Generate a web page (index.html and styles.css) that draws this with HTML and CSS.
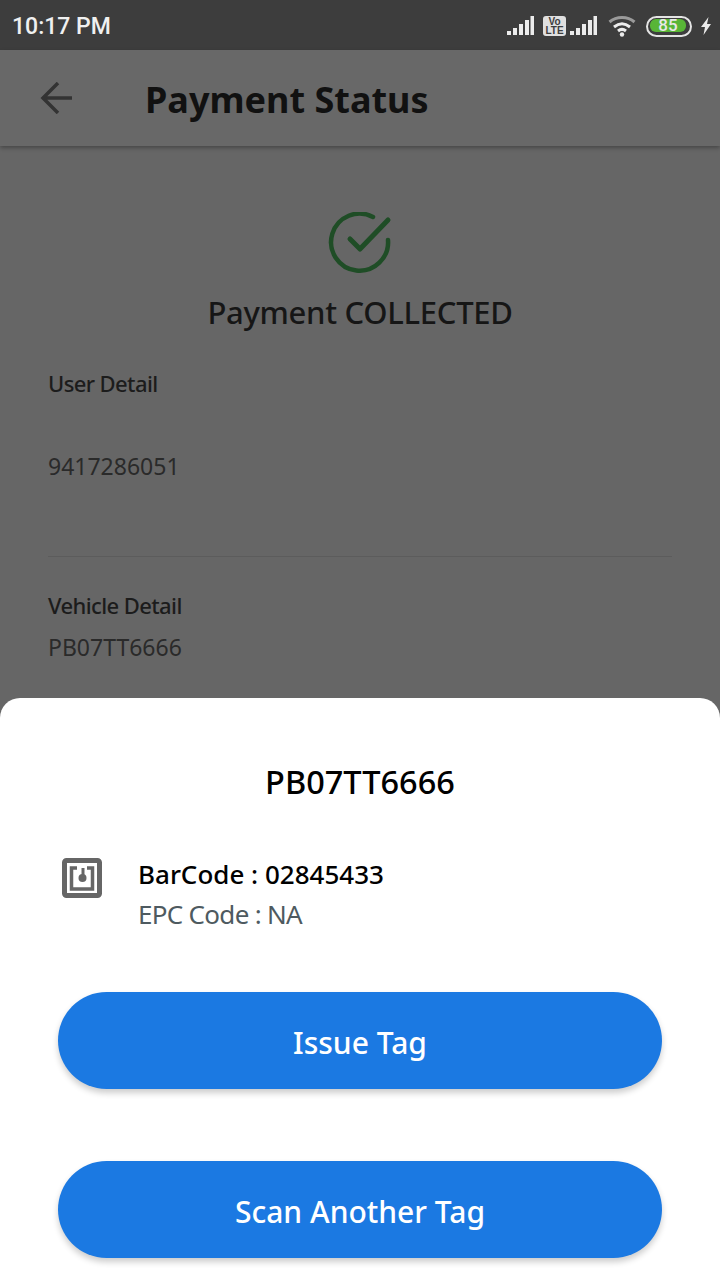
FILE: index.html
```html
<!DOCTYPE html>
<html lang="en">
<head>
    <meta charset="UTF-8">
    <meta name="viewport" content="width=device-width, initial-scale=1.0">
    <title>Payment Status</title>
    <link rel="stylesheet" href="styles.css">
</head>
<body>
    <div class="statusbar">
        <span class="time">10:17 PM</span>
        <div class="status-icons">
            <svg class="signal" width="28" height="20" viewBox="0 0 28 20"><path d="M1 15h4v4H1zM7 12h4v7H7zM13 8h4v11h-4zM19 4h4v15h-4zM24.500 0h3.500v19h-3.500z" fill="#ececec"/></svg>
            <div class="volte">Vo<br>LTE</div>
            <svg class="signal signal-2" width="28" height="20" viewBox="0 0 28 20"><path d="M1 15h4v4H1zM7 12h4v7H7zM13 8h4v11h-4zM19 4h4v15h-4zM24.500 0h3.500v19h-3.500z" fill="#ececec"/></svg>
            <svg class="wifi" width="28" height="22" viewBox="0 0 28 22"><g fill="none" stroke="#ececec" stroke-width="3"><path d="M1.500 7c7-6 18-6 25 0" stroke="#9a9a9a"/><path d="M6 12c5-4 11-4 16 0"/><path d="M10 16c2.500-2 5.500-2 8 0"/></g><circle cx="14" cy="19.500" r="2.200" fill="#ececec"/></svg>
            <div class="battery"><span class="battery-level">85</span></div>
            <svg class="bolt" width="12" height="20" viewBox="0 0 12 20"><path d="M8.500 1L1 11h4l-1.500 8L11 8H7z" fill="#ececec"/></svg>
        </div>
    </div>

    <div class="appbar">
        <svg class="back" width="36" height="32" viewBox="0 0 36 32"><path d="M34 16H4M20 1L5 16l15 15" fill="none" stroke="#333" stroke-width="3.500"/></svg>
        <h1 class="title">Payment Status</h1>
    </div>

    <div class="content">
        <div class="result">
            <svg width="64" height="64" viewBox="0 0 64 64"><path d="M45 5A28.500 28.500 0 1 0 60 28" fill="none" stroke="#1f4d26" stroke-width="4.500" stroke-linecap="round"/><path d="M22 27l10 10 28-29" fill="none" stroke="#1f4d26" stroke-width="5" stroke-linecap="round" stroke-linejoin="round"/></svg>
            <h2 class="result-text">Payment COLLECTED</h2>
        </div>
        <div class="section user">
            <p class="label">User Detail</p>
            <p class="value">9417286051</p>
        </div>
        <div class="section vehicle">
            <p class="label">Vehicle Detail</p>
            <p class="value">PB07TT6666</p>
        </div>
    </div>

    <div class="sheet">
        <h2 class="sheet-title">PB07TT6666</h2>
        <div class="tag-row">
            <svg class="tag-icon" width="40" height="40" viewBox="0 0 40 40">
                <rect x="2.500" y="2.500" width="35" height="35" rx="2" fill="none" stroke="#666" stroke-width="5"/>
                <path d="M15 10H9.500v21h21V10H25" fill="none" stroke="#666" stroke-width="3.500"/>
                <path d="M21 10v9" stroke="#666" stroke-width="3"/>
                <circle cx="20.500" cy="20" r="4" fill="#666"/>
            </svg>
            <div class="tag-text">
                <p class="barcode">BarCode : 02845433</p>
                <p class="epc">EPC Code : NA</p>
            </div>
        </div>
        <button class="btn">Issue Tag</button>
        <button class="btn">Scan Another Tag</button>
    </div>
</body>
</html>
```

FILE: styles.css
```css
* {
    box-sizing: border-box;
}
html, body {
    margin: 0;
    padding: 0;
}
body {
    width: 720px;
    height: 1280px;
    position: relative;
    overflow: hidden;
    background: #666;
    font-family: "Noto Sans", sans-serif;
    color: #1c1c1c;
}
p, h1, h2 {
    margin: 0;
}
.statusbar {
    height: 50px;
    background: #3d3d3d;
    display: flex;
    align-items: center;
    justify-content: space-between;
    padding: 2px 8px 0 12px;
}
.time {
    font-family: Roboto, sans-serif;
    font-size: 23px;
    font-weight: 500;
    color: #f0f0f0;
}
.status-icons {
    display: flex;
    align-items: center;
}
.signal {
    margin-right: 9px;
}
.signal-2 {
    margin-right: 11px;
}
.volte {
    width: 23px;
    height: 20px;
    margin-right: 3px;
    background: #e0e0e0;
    border-radius: 3px;
    color: #3d3d3d;
    font-family: "Liberation Sans", sans-serif;
    font-size: 10px;
    font-weight: 700;
    line-height: 9px;
    text-align: center;
    padding-top: 1px;
}
.wifi {
    margin-right: 10px;
}
.battery {
    width: 46px;
    height: 21px;
    border: 2.500px solid #e4e4e4;
    border-radius: 11px;
    padding: 1.500px 2px;
    margin-right: 8px;
}
.battery-level {
    display: block;
    height: 13px;
    width: 36px;
    background: #58b536;
    border-radius: 6px;
    color: #e8e8e8;
    font-family: Roboto, sans-serif;
    font-size: 17px;
    font-weight: 500;
    line-height: 13px;
    text-align: center;
}
.appbar {
    height: 96px;
    background: #686868;
    display: flex;
    align-items: center;
    padding-left: 38px;
    box-shadow: 0 2px 4px rgba(0, 0, 0, 0.3);
}
.title {
    margin-left: 71px;
    padding-top: 3px;
    font-size: 36px;
    font-weight: 700;
    color: #111;
}
.content {
    padding: 0 48px;
}
.result {
    display: flex;
    flex-direction: column;
    align-items: center;
    padding-top: 66px;
}
.result-text {
    font-size: 31px;
    font-weight: 500;
    letter-spacing: -0.3px;
    margin-top: 15px;
    color: #161616;
}
.section {
    border-bottom: 1px solid #5c5c5c;
}
.user {
    margin-top: 35px;
    height: 189px;
}
.vehicle {
    border: 0;
    margin-top: 33px;
}
.label {
    font-size: 22px;
    font-weight: 500;
    letter-spacing: -0.6px;
    line-height: 31px;
}
.value {
    font-size: 23px;
    color: #2a2a2a;
}
.user .value {
    margin-top: 51px;
}
.vehicle .value {
    margin-top: 10px;
}
.sheet {
    position: absolute;
    left: 0;
    right: 0;
    top: 698px;
    bottom: 0;
    background: #fff;
    border-radius: 20px 20px 0 0;
    padding: 0 58px;
}
.sheet-title {
    margin-top: 62px;
    font-size: 32.500px;
    font-weight: 500;
    line-height: 44px;
    color: #000;
    text-align: center;
}
.tag-row {
    display: flex;
    margin-top: 52px;
    padding-left: 4px;
}
.tag-icon {
    margin-top: 2px;
    flex-shrink: 0;
}
.tag-text {
    margin-left: 36px;
}
.barcode {
    font-size: 26px;
    font-weight: 500;
    color: #000;
    line-height: 36px;
}
.epc {
    font-size: 26px;
    letter-spacing: -0.7px;
    color: #4e5a60;
    line-height: 44px;
}
.btn {
    display: block;
    width: 100%;
    height: 97px;
    margin-top: 56px;
    padding: 3px 0 0;
    border: 0;
    border-radius: 49px;
    background: #1b79e2;
    color: #fff;
    font-family: inherit;
    font-size: 30px;
    font-weight: 500;
    box-shadow: 0 4px 6px rgba(0, 0, 0, 0.2);
}
.btn + .btn {
    margin-top: 72px;
}
```
